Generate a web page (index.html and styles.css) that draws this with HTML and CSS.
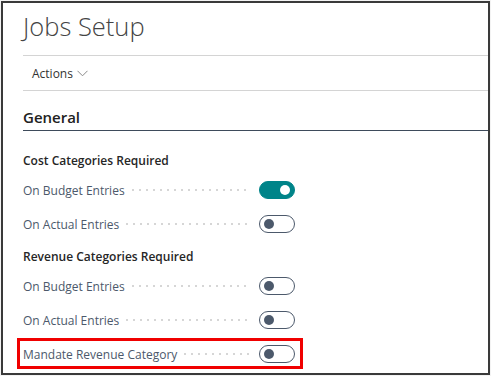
FILE: index.html
```html
<!DOCTYPE html>
<html lang="en">
<head>
    <meta charset="UTF-8">
    <meta name="viewport" content="width=device-width, initial-scale=1.0">
    <title>Jobs Setup</title>
    <link rel="stylesheet" href="styles.css">
</head>
<body>
    <div class="frame">
        <h1 class="page-title">Jobs Setup</h1>

        <div class="action-bar">
            <span class="action-menu">
                Actions
                <svg class="chevron" width="11" height="7" viewBox="0 0 11 7">
                    <polyline points="0.5,0.8 5.5,5.8 10.5,0.8" fill="none" stroke="#8a8a8a" stroke-width="1"/>
                </svg>
            </span>
        </div>

        <div class="section-heading">General</div>

        <div class="field-list">
            <div class="group-heading first">Cost Categories Required</div>
            <div class="field-row">
                <span class="field-label">On Budget Entries</span>
                <span class="leader"></span>
                <span class="toggle on"></span>
            </div>
            <div class="field-row">
                <span class="field-label">On Actual Entries</span>
                <span class="leader"></span>
                <span class="toggle"></span>
            </div>

            <div class="group-heading">Revenue Categories Required</div>
            <div class="field-row">
                <span class="field-label">On Budget Entries</span>
                <span class="leader"></span>
                <span class="toggle"></span>
            </div>
            <div class="field-row">
                <span class="field-label">On Actual Entries</span>
                <span class="leader"></span>
                <span class="toggle"></span>
            </div>
            <div class="field-row highlight">
                <span class="field-label">Mandate Revenue Category</span>
                <span class="leader"></span>
                <span class="toggle"></span>
            </div>
        </div>
    </div>
</body>
</html>
```

FILE: styles.css
```css
body {
    margin: 0;
    font-family: "Open Sans", "Noto Sans", sans-serif;
    background-color: #f3f3f3;
}
.frame {
    margin: 1px;
    width: 489px;
    height: 374px;
    box-sizing: border-box;
    border: 2px solid #3a3a3a;
    padding-left: 20px;
    background-color: #fff;
    overflow: hidden;
}
.page-title {
    margin: 0;
    height: 46px;
    padding-top: 6px;
    font-size: 25.5px;
    font-weight: 300;
    line-height: 34px;
    color: #444;
    border-bottom: 1px solid #d4d4d4;
}
.action-bar {
    height: 34px;
    display: flex;
    align-items: center;
    padding-left: 9px;
    border-bottom: 1px solid #d4d4d4;
}
.action-menu {
    font-size: 12px;
    color: #333;
    display: flex;
    align-items: center;
    gap: 4px;
}
.chevron {
    margin-top: 1px;
}
.section-heading {
    height: 20px;
    padding-top: 16px;
    padding-bottom: 3px;
    font-size: 15px;
    font-weight: 600;
    line-height: 20px;
    color: #212121;
    border-bottom: 1px solid #3e4b5b;
}
.field-list {
    width: 272px;
}
.group-heading {
    height: 25px;
    padding-top: 3px;
    line-height: 25px;
    font-size: 12px;
    font-weight: 600;
    color: #262626;
}
.group-heading.first {
    margin-top: 14px;
}
.field-row {
    position: relative;
    height: 34px;
    display: flex;
    align-items: center;
}
.field-label {
    font-size: 12px;
    color: #4c596b;
    white-space: nowrap;
}
.leader {
    flex: 1;
    height: 2px;
    margin-left: 7px;
    margin-right: 9px;
    background-image: linear-gradient(to right, #d6d6d6 2px, transparent 2px);
    background-size: 7px 2px;
    background-repeat: repeat-x;
}
.toggle {
    position: relative;
    width: 36px;
    height: 18px;
    box-sizing: border-box;
    border: 1px solid #4c596b;
    border-radius: 9px;
    background-color: #fff;
}
.toggle::after {
    content: "";
    position: absolute;
    top: 3px;
    left: 4px;
    width: 10px;
    height: 10px;
    border-radius: 50%;
    background-color: #4c596b;
}
.toggle.on {
    border-color: #008489;
    background-color: #008489;
}
.toggle.on::after {
    left: auto;
    right: 4px;
    background-color: #fff;
}
.highlight::before {
    content: "";
    position: absolute;
    top: 1px;
    bottom: 2px;
    left: -6px;
    right: -8px;
    border: 3px solid #f00000;
    pointer-events: none;
}
```
